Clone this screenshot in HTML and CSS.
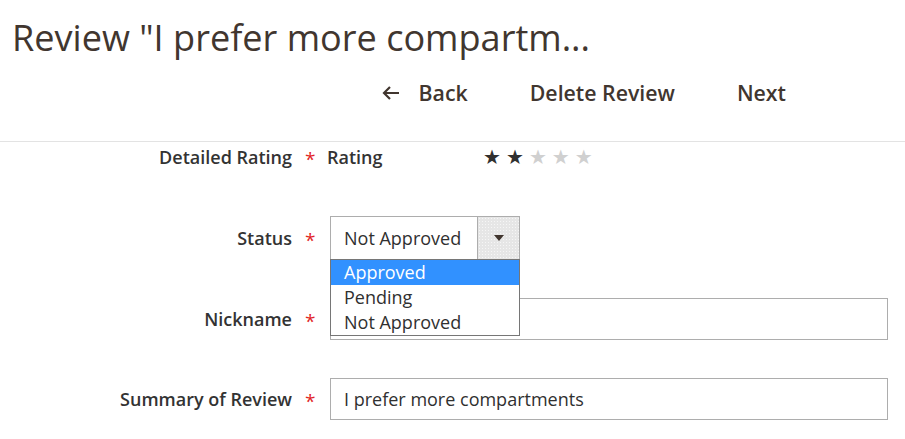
FILE: index.html
```html
<!DOCTYPE html>
<html>
<head>
<meta charset="utf-8">
<link rel="stylesheet" href="styles.css">
</head>
<body>
<header class="page-header">
  <h1 class="page-title">Review "I prefer more compartm...</h1>
  <div class="page-actions">
    <button class="action back"><svg class="arrow" width="19" height="16" viewBox="0 0 19 16"><path d="M18 8H3M9 2L3 8l6 6" fill="none" stroke="#41362f" stroke-width="2.2"/></svg>Back</button>
    <button class="action">Delete Review</button>
    <button class="action">Next</button>
  </div>
</header>
<main class="form">
  <div class="field rating-field">
    <div class="label">Detailed Rating</div>
    <div class="req">*</div>
    <div class="rating">
      <span class="rating-name">Rating</span>
      <span class="stars"><span class="on">★</span><span class="on">★</span><span>★</span><span>★</span><span>★</span></span>
    </div>
  </div>
  <div class="field status-field">
    <div class="label">Status</div>
    <div class="req">*</div>
    <div class="control">
      <div class="select">
        <span class="select-value">Not Approved</span>
        <span class="select-btn"><span class="tri"></span></span>
      </div>
      <ul class="dropdown">
        <li class="selected">Approved</li>
        <li>Pending</li>
        <li>Not Approved</li>
      </ul>
    </div>
  </div>
  <div class="field">
    <div class="label">Nickname</div>
    <div class="req">*</div>
    <div class="control"><div class="input"></div></div>
  </div>
  <div class="field">
    <div class="label">Summary of Review</div>
    <div class="req">*</div>
    <div class="control"><div class="input">I prefer more compartments</div></div>
  </div>
</main>
</body>
</html>
```
FILE: styles.css
```css
* { box-sizing: border-box; }
body {
  margin: 0;
  font-family: "Open Sans", "Noto Sans", sans-serif;
  color: #303030;
  background: #fff;
  width: 905px;
  height: 439px;
  overflow: hidden;
}
.page-header {
  border-bottom: 1px solid #e3e3e3;
  height: 142px;
}
.page-title {
  margin: 0;
  padding: 12px 0 0 12px;
  font-size: 36.1px;
  font-weight: 400;
  line-height: 50px;
  color: #41362f;
}
.page-actions {
  display: flex;
  justify-content: flex-end;
  padding-right: 119px;
  margin-top: 16px;
  gap: 62px;
}
.action {
  background: none;
  border: 0;
  padding: 0;
  font-family: inherit;
  font-size: 21.3px;
  font-weight: 600;
  color: #41362f;
  line-height: 30px;
  display: flex;
  align-items: center;
}
.arrow { margin-right: 19px; }
.form { padding-top: 3px; }
.field {
  display: grid;
  grid-template-columns: 292px 38px 558px;
  align-items: center;
  margin-bottom: 38px;
  position: relative;
}
.field:last-child { margin-bottom: 0; }
.label {
  text-align: right;
  font-size: 18px;
  font-weight: 600;
  color: #333;
}
.req {
  color: #e22626;
  font-size: 19px;
  padding-left: 13px;
  line-height: 20px;
  padding-top: 4px;
}
.rating-field { margin-bottom: 47px; }
.rating {
  display: flex;
  align-items: center;
  margin-left: -3px;
}
.rating-name {
  font-size: 18px;
  font-weight: 600;
  color: #333;
  width: 156px;
}
.stars {
  display: flex;
  gap: 5px;
  font-size: 20px;
  color: #d0d0d0;
  font-family: "DejaVu Sans", sans-serif;
}
.stars .on { color: #303030; }
.control { position: relative; }
.select {
  width: 190px;
  height: 44px;
  border: 1px solid #adadad;
  display: flex;
  align-items: stretch;
}
.select-value {
  flex: 1;
  display: flex;
  align-items: center;
  padding-left: 13px;
  font-size: 18px;
  color: #303030;
}
.select-btn {
  width: 42px;
  border-left: 1px solid #adadad;
  background-color: #e6e6e6;
  background-image: radial-gradient(circle, #f6f6f6 0.7px, transparent 0.9px);
  background-size: 3px 3px;
  display: flex;
  align-items: center;
  justify-content: center;
}
.tri {
  width: 0; height: 0;
  border-left: 5px solid transparent;
  border-right: 5px solid transparent;
  border-top: 6px solid #41362f;
}
.dropdown {
  position: absolute;
  left: 0;
  top: 43px;
  width: 190px;
  margin: 0;
  padding: 0;
  list-style: none;
  background: #fff;
  border: 1px solid #767676;
  z-index: 5;
}
.dropdown li {
  height: 25px;
  line-height: 25px;
  padding-left: 13px;
  font-size: 18px;
  color: #303030;
}
.dropdown li.selected {
  background: #3191ff;
  color: #fff;
}
.input {
  height: 42px;
  border: 1px solid #adadad;
  display: flex;
  align-items: center;
  padding-left: 13px;
  font-size: 18px;
  color: #303030;
}
```
